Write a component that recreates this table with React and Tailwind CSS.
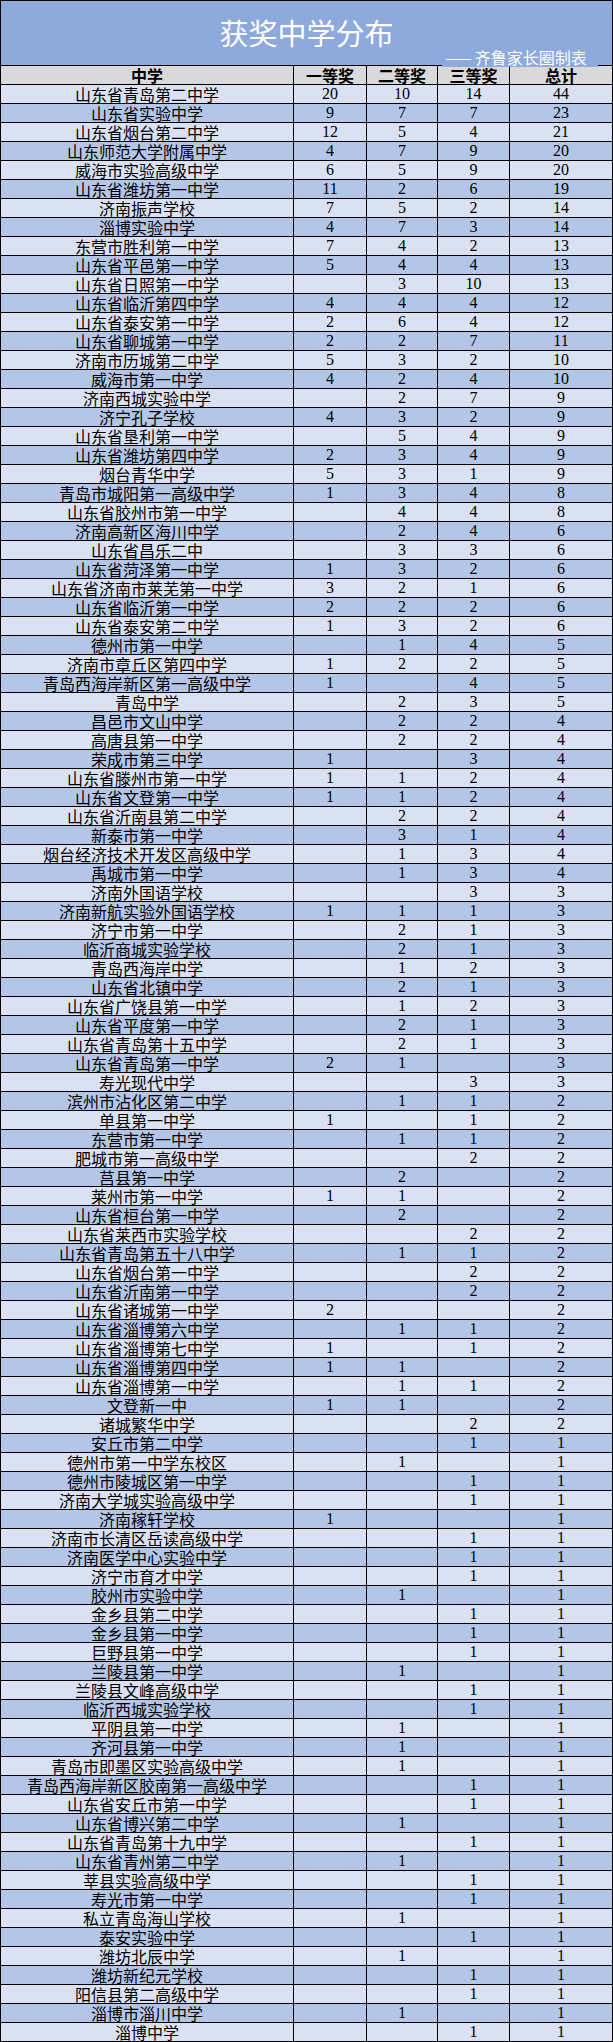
import React from 'react'

const schools = [
    ["山东省青岛第二中学", "20", "10", "14", "44"],
    ["山东省实验中学", "9", "7", "7", "23"],
    ["山东省烟台第二中学", "12", "5", "4", "21"],
    ["山东师范大学附属中学", "4", "7", "9", "20"],
    ["威海市实验高级中学", "6", "5", "9", "20"],
    ["山东省潍坊第一中学", "11", "2", "6", "19"],
    ["济南振声学校", "7", "5", "2", "14"],
    ["淄博实验中学", "4", "7", "3", "14"],
    ["东营市胜利第一中学", "7", "4", "2", "13"],
    ["山东省平邑第一中学", "5", "4", "4", "13"],
    ["山东省日照第一中学", "", "3", "10", "13"],
    ["山东省临沂第四中学", "4", "4", "4", "12"],
    ["山东省泰安第一中学", "2", "6", "4", "12"],
    ["山东省聊城第一中学", "2", "2", "7", "11"],
    ["济南市历城第二中学", "5", "3", "2", "10"],
    ["威海市第一中学", "4", "2", "4", "10"],
    ["济南西城实验中学", "", "2", "7", "9"],
    ["济宁孔子学校", "4", "3", "2", "9"],
    ["山东省垦利第一中学", "", "5", "4", "9"],
    ["山东省潍坊第四中学", "2", "3", "4", "9"],
    ["烟台青华中学", "5", "3", "1", "9"],
    ["青岛市城阳第一高级中学", "1", "3", "4", "8"],
    ["山东省胶州市第一中学", "", "4", "4", "8"],
    ["济南高新区海川中学", "", "2", "4", "6"],
    ["山东省昌乐二中", "", "3", "3", "6"],
    ["山东省菏泽第一中学", "1", "3", "2", "6"],
    ["山东省济南市莱芜第一中学", "3", "2", "1", "6"],
    ["山东省临沂第一中学", "2", "2", "2", "6"],
    ["山东省泰安第二中学", "1", "3", "2", "6"],
    ["德州市第一中学", "", "1", "4", "5"],
    ["济南市章丘区第四中学", "1", "2", "2", "5"],
    ["青岛西海岸新区第一高级中学", "1", "", "4", "5"],
    ["青岛中学", "", "2", "3", "5"],
    ["昌邑市文山中学", "", "2", "2", "4"],
    ["高唐县第一中学", "", "2", "2", "4"],
    ["荣成市第三中学", "1", "", "3", "4"],
    ["山东省滕州市第一中学", "1", "1", "2", "4"],
    ["山东省文登第一中学", "1", "1", "2", "4"],
    ["山东省沂南县第二中学", "", "2", "2", "4"],
    ["新泰市第一中学", "", "3", "1", "4"],
    ["烟台经济技术开发区高级中学", "", "1", "3", "4"],
    ["禹城市第一中学", "", "1", "3", "4"],
    ["济南外国语学校", "", "", "3", "3"],
    ["济南新航实验外国语学校", "1", "1", "1", "3"],
    ["济宁市第一中学", "", "2", "1", "3"],
    ["临沂商城实验学校", "", "2", "1", "3"],
    ["青岛西海岸中学", "", "1", "2", "3"],
    ["山东省北镇中学", "", "2", "1", "3"],
    ["山东省广饶县第一中学", "", "1", "2", "3"],
    ["山东省平度第一中学", "", "2", "1", "3"],
    ["山东省青岛第十五中学", "", "2", "1", "3"],
    ["山东省青岛第一中学", "2", "1", "", "3"],
    ["寿光现代中学", "", "", "3", "3"],
    ["滨州市沾化区第二中学", "", "1", "1", "2"],
    ["单县第一中学", "1", "", "1", "2"],
    ["东营市第一中学", "", "1", "1", "2"],
    ["肥城市第一高级中学", "", "", "2", "2"],
    ["莒县第一中学", "", "2", "", "2"],
    ["莱州市第一中学", "1", "1", "", "2"],
    ["山东省桓台第一中学", "", "2", "", "2"],
    ["山东省莱西市实验学校", "", "", "2", "2"],
    ["山东省青岛第五十八中学", "", "1", "1", "2"],
    ["山东省烟台第一中学", "", "", "2", "2"],
    ["山东省沂南第一中学", "", "", "2", "2"],
    ["山东省诸城第一中学", "2", "", "", "2"],
    ["山东省淄博第六中学", "", "1", "1", "2"],
    ["山东省淄博第七中学", "1", "", "1", "2"],
    ["山东省淄博第四中学", "1", "1", "", "2"],
    ["山东省淄博第一中学", "", "1", "1", "2"],
    ["文登新一中", "1", "1", "", "2"],
    ["诸城繁华中学", "", "", "2", "2"],
    ["安丘市第二中学", "", "", "1", "1"],
    ["德州市第一中学东校区", "", "1", "", "1"],
    ["德州市陵城区第一中学", "", "", "1", "1"],
    ["济南大学城实验高级中学", "", "", "1", "1"],
    ["济南稼轩学校", "1", "", "", "1"],
    ["济南市长清区岳读高级中学", "", "", "1", "1"],
    ["济南医学中心实验中学", "", "", "1", "1"],
    ["济宁市育才中学", "", "", "1", "1"],
    ["胶州市实验中学", "", "1", "", "1"],
    ["金乡县第二中学", "", "", "1", "1"],
    ["金乡县第一中学", "", "", "1", "1"],
    ["巨野县第一中学", "", "", "1", "1"],
    ["兰陵县第一中学", "", "1", "", "1"],
    ["兰陵县文峰高级中学", "", "", "1", "1"],
    ["临沂西城实验学校", "", "", "1", "1"],
    ["平阴县第一中学", "", "1", "", "1"],
    ["齐河县第一中学", "", "1", "", "1"],
    ["青岛市即墨区实验高级中学", "", "1", "", "1"],
    ["青岛西海岸新区胶南第一高级中学", "", "", "1", "1"],
    ["山东省安丘市第一中学", "", "", "1", "1"],
    ["山东省博兴第二中学", "", "1", "", "1"],
    ["山东省青岛第十九中学", "", "", "1", "1"],
    ["山东省青州第二中学", "", "1", "", "1"],
    ["莘县实验高级中学", "", "", "1", "1"],
    ["寿光市第一中学", "", "", "1", "1"],
    ["私立青岛海山学校", "", "1", "", "1"],
    ["泰安实验中学", "", "", "1", "1"],
    ["潍坊北辰中学", "", "1", "", "1"],
    ["潍坊新纪元学校", "", "", "1", "1"],
    ["阳信县第二高级中学", "", "", "1", "1"],
    ["淄博市淄川中学", "", "1", "", "1"],
    ["淄博中学", "", "", "1", "1"],
]

const cjk = "font-['Noto_Sans_CJK_SC',sans-serif]"

function App() {
    return (
        <div className="w-[613px] bg-white text-black">
            <div className="relative h-[65px] border-t border-l border-r border-black bg-[#8ea9db] flex items-center justify-center">
                <h1 className={`${cjk} text-[29px] leading-[29px] text-white pb-[2px]`}>
                    获奖中学分布
                </h1>
                {/* subtitle box sits over the header's top line */}
                <div className={`${cjk} absolute left-[441px] top-[47px] z-10 h-[19px] w-[156px] bg-[#8ea9db] pl-[3px] text-[16px] leading-[19px] text-white`}>
                    <span className="tracking-[3px]">——</span>齐鲁家长圈制表
                </div>
            </div>

            <div className="grid grid-cols-[293px_73px_71px_72px_1fr] border-t border-l border-r border-black">
                {["中学", "一等奖", "二等奖", "三等奖", "总计"].map((h, i) => (
                    <div
                        key={h}
                        className={`${cjk} h-[19px] border-b border-black bg-[#d9d9d9] text-center text-[16px] font-bold leading-[18px] ${i < 4 ? "border-r" : ""}`}
                    >
                        {h}
                    </div>
                ))}

                {schools.map((row, r) => {
                    const bg = r % 2 === 0 ? "bg-[#d9e1f2]" : "bg-[#b4c6e7]"
                    return row.map((cell, i) => (
                        <div
                            key={r + "-" + i}
                            className={`h-[19px] border-b border-black text-center whitespace-nowrap ${bg} ${i < 4 ? "border-r" : ""} ${
                                i === 0
                                    ? `${cjk} text-[16px] leading-[18px]`
                                    : "font-['Liberation_Serif',serif] text-[16px] leading-[18px]"
                            }`}
                        >
                            {cell}
                        </div>
                    ))
                })}
            </div>
        </div>
    )
}

export default App
